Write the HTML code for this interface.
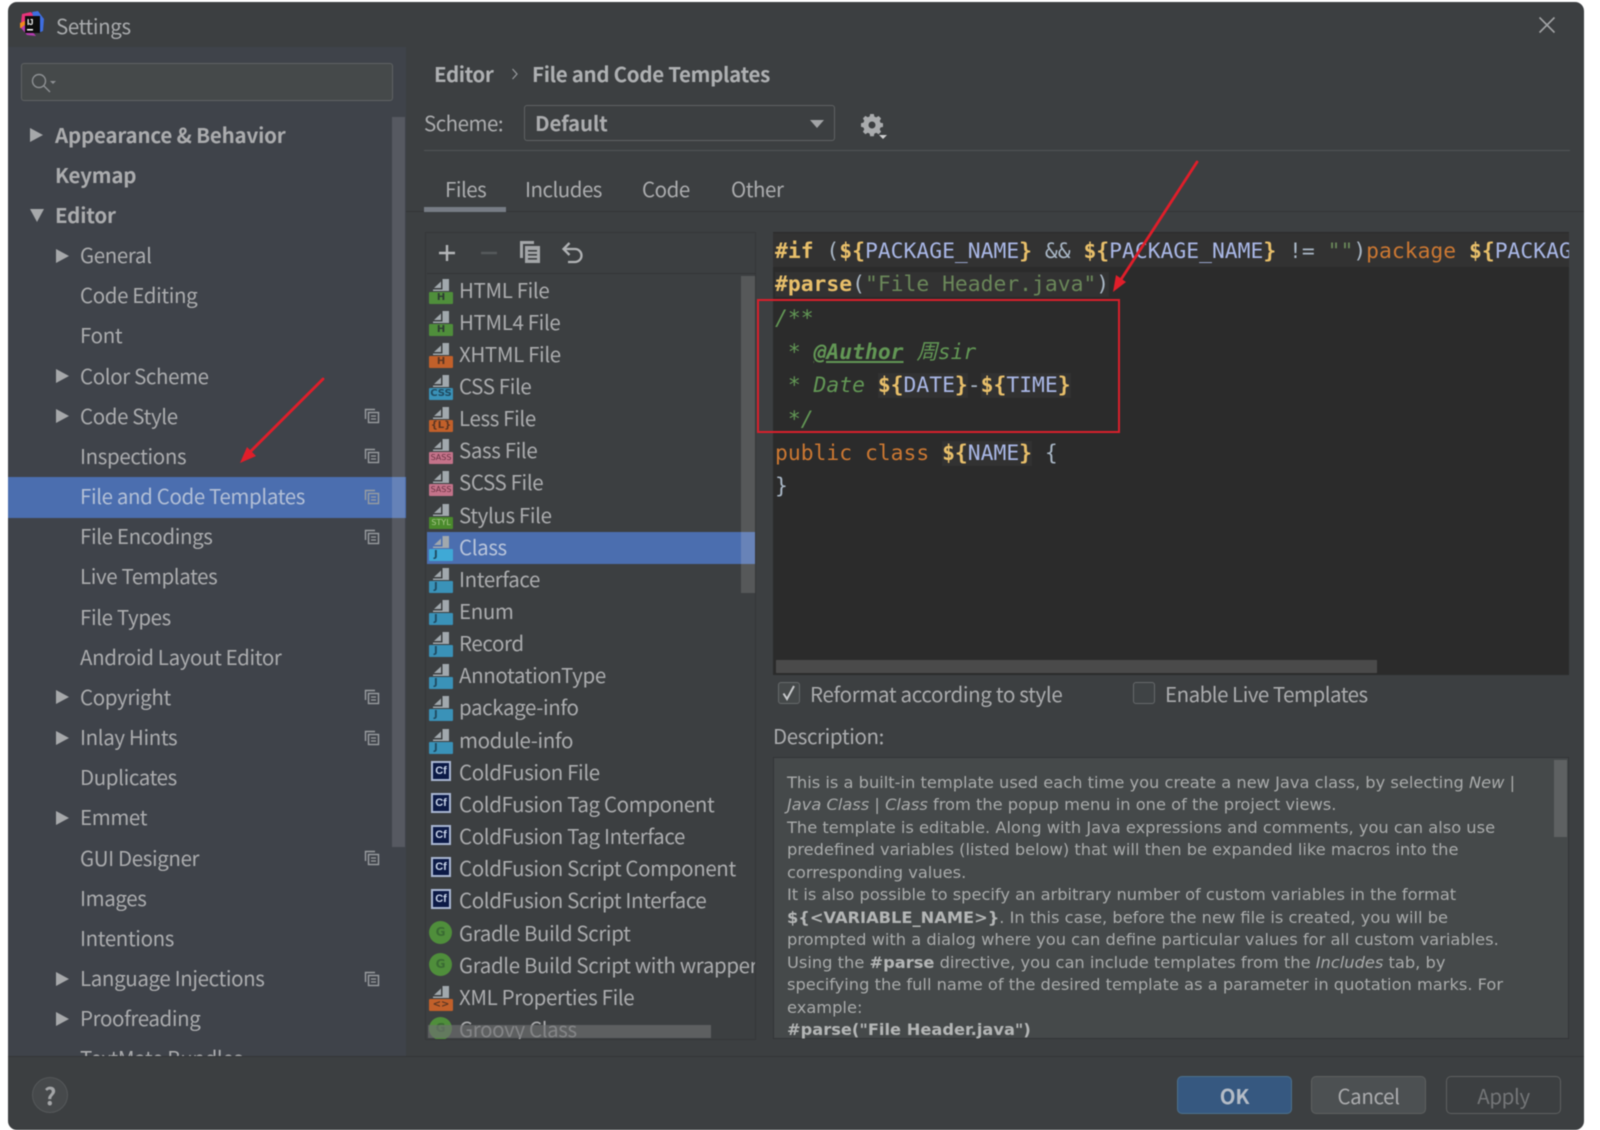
<!DOCTYPE html>
<html><head><meta charset="utf-8"><title>Settings</title>
<style>
html,body{margin:0;padding:0;background:#fff;width:1600px;height:1130px;overflow:hidden}
#root{position:absolute;left:0;top:0;width:1600px;height:1130px;overflow:hidden;filter:blur(.6px);font-family:"Noto Sans CJK SC","Liberation Sans",sans-serif;font-size:20.5px;letter-spacing:-.37px;color:#abacae}
#root div,#root svg{position:absolute}
#root span{position:static}
.t{white-space:pre}
.bd{font-weight:700;letter-spacing:-.18px}
#win{left:8px;top:2px;width:1576px;height:1128px;background:#3c3f41;border-radius:9px}
#side{left:8px;top:47px;width:398px;height:1009px;background:#3f434a;overflow:hidden}
#inner{left:-8px;top:-47px;width:420px;height:1130px}
.s{left:80px;height:40px;line-height:40px;white-space:pre;top:calc(113.5px + 40.17px*var(--i))}
.s.top{left:55px;font-weight:700;letter-spacing:-.18px}
.ar{width:0;height:0;border-top:7px solid transparent;border-bottom:7px solid transparent;border-left:13px solid #a6a8aa;left:-24px;top:14.5px}
.top .ar{left:-25px}
.dn{width:0;height:0;border-left:7px solid transparent;border-right:7px solid transparent;border-top:13px solid #a6a8aa;left:-25px;top:15px}
.cp{left:364px;width:16px;height:16px;top:calc(127px + 40.17px*var(--i))}
#l{left:425px;top:232px;width:331px;height:808px;background:#3c3f41;border:1px solid #353739;box-sizing:border-box;overflow:hidden}
#li{left:-425px;top:-232px;width:760px;height:1100px}
.f{left:428px;height:32px;line-height:32px;padding-left:30px;white-space:pre;top:calc(271.5px + 32.15px*var(--i))}
.d{left:4px;top:6px;width:20px;height:13px}
.b{left:0;top:19px;width:24px;height:12px;border-radius:1px;font:700 10px/12px "DejaVu Sans",sans-serif;letter-spacing:0;text-align:center;color:#2e3b33;overflow:hidden}
.cf{left:2px;top:6px;width:16px;height:16px;border:2px solid #a9b6d2;background:#0c1a46;color:#c8d4ea;font:700 11px/16px "Liberation Sans",sans-serif;letter-spacing:0;text-align:center}
.g{left:0;top:5px;width:23px;height:23px;border-radius:50%;background:#4f8e3b;color:#3a6b33;font:700 12px/23px "DejaVu Sans",sans-serif;letter-spacing:0;text-align:center}
#ed{left:773px;top:232px;width:796px;height:443px;background:#2b2b2b;overflow:hidden}
.c{left:2px;height:34px;white-space:pre;font:21.35px/34px "DejaVu Sans Mono","Liberation Mono",monospace;letter-spacing:0;color:#a9b7c6;top:calc(2.5px + 33.7px*var(--i))}
.y{color:#e8bf6a;font-weight:700}.v{color:#a9b7e6;font-weight:400}.bg{background:#323232}
.o{color:#cc7832}.gs{color:#6a8759}.cm{color:#629755;font-style:italic}
.ds{left:787px;height:22px;white-space:pre;font:16.25px/22px "DejaVu Sans",sans-serif;letter-spacing:0;color:#a9abab;top:calc(772px + 22.45px*var(--i))}
.ds b{color:#b4b6b6}
.btn{top:1076px;height:38px;width:115px;box-sizing:border-box;border-radius:5px;text-align:center;line-height:36px}
</style></head><body>
<div id="root">
<div id="win"></div>

<svg style="left:18px;top:10px" width="28" height="28" viewBox="0 0 28 28"><path d="M4 4l9-2 3 4-8 6-5 1z" fill="#e8337a"/><path d="M14 2l6-1 6 8-1 12-5 2z" fill="#3f6ee0"/><path d="M2 13l5-2 1 7-6 0z" fill="#f08a1d"/><path d="M3 18l6 7 9 1-10-12z" fill="#b53bb0"/><rect x="7" y="6" width="15" height="17" fill="#0d0d0d"/><text x="9" y="15" font-family="Liberation Sans" font-size="8" font-weight="700" fill="#fff">IJ</text><rect x="9" y="19" width="6" height="1.5" fill="#fff"/></svg>
<div class="t" style="left:56px;top:10px;line-height:30px;font-size:20.5px;color:#a9abad">Settings</div>
<svg style="left:1538px;top:16px" width="18" height="18" viewBox="0 0 18 18"><path d="M1.5 1.5L16.5 16.5M16.5 1.5L1.5 16.5" stroke="#a0a2a4" stroke-width="1.6"/></svg>

<div id="side"><div id="inner">
<div style="left:21px;top:63px;width:372px;height:38px;box-sizing:border-box;background:#45494a;border:1px solid #5f6263;border-radius:3px"></div>
<svg style="left:30px;top:72px" width="32" height="22" viewBox="0 0 32 22"><circle cx="9" cy="9" r="6.5" fill="none" stroke="#8d9093" stroke-width="1.4"/><path d="M13.5 13.5L20 20" stroke="#8d9093" stroke-width="1.4"/><path d="M20 9h6l-3 3z" fill="#8d9093"/></svg>
<div style="left:392px;top:117px;width:13px;height:730px;background:#565961"></div>
<div style="left:8px;top:477px;width:398px;height:41px;background:#4b6eaf"></div>
<div style="left:392px;top:477px;width:13px;height:41px;background:#6582b8"></div>

<div class="s top" style="--i:0"><div class="ar"></div>Appearance &amp; Behavior</div>
<div class="s top" style="--i:1">Keymap</div>
<div class="s top" style="--i:2"><div class="dn"></div>Editor</div>
<div class="s" style="--i:3"><div class="ar"></div>General</div>
<div class="s" style="--i:4">Code Editing</div>
<div class="s" style="--i:5">Font</div>
<div class="s" style="--i:6"><div class="ar"></div>Color Scheme</div>
<div class="s" style="--i:7"><div class="ar"></div>Code Style</div>
<div class="s" style="--i:8">Inspections</div>
<div class="s" style="--i:9;color:#b2bfd6">File and Code Templates</div>
<div class="s" style="--i:10">File Encodings</div>
<div class="s" style="--i:11">Live Templates</div>
<div class="s" style="--i:12">File Types</div>
<div class="s" style="--i:13">Android Layout Editor</div>
<div class="s" style="--i:14"><div class="ar"></div>Copyright</div>
<div class="s" style="--i:15"><div class="ar"></div>Inlay Hints</div>
<div class="s" style="--i:16">Duplicates</div>
<div class="s" style="--i:17"><div class="ar"></div>Emmet</div>
<div class="s" style="--i:18">GUI Designer</div>
<div class="s" style="--i:19">Images</div>
<div class="s" style="--i:20">Intentions</div>
<div class="s" style="--i:21"><div class="ar"></div>Language Injections</div>
<div class="s" style="--i:22"><div class="ar"></div>Proofreading</div>
<div class="s" style="--i:23">TextMate Bundles</div>

<svg width="0" height="0" style="position:absolute"><defs><symbol id="cpi" viewBox="0 0 16 16"><path d="M11 1.5H1.5V11" fill="none" stroke="#9a9da0" stroke-width="1.4"/><rect x="4.5" y="4.5" width="10" height="10" fill="none" stroke="#9a9da0" stroke-width="1.4"/><path d="M7 8h5M7 11h5" stroke="#9a9da0" stroke-width="1.3"/></symbol></defs></svg>
<svg class="cp" style="--i:7"><use href="#cpi"/></svg>
<svg class="cp" style="--i:8"><use href="#cpi"/></svg>
<svg class="cp" style="--i:9"><use href="#cpi"/></svg>
<svg class="cp" style="--i:10"><use href="#cpi"/></svg>
<svg class="cp" style="--i:14"><use href="#cpi"/></svg>
<svg class="cp" style="--i:15"><use href="#cpi"/></svg>
<svg class="cp" style="--i:18"><use href="#cpi"/></svg>
<svg class="cp" style="--i:21"><use href="#cpi"/></svg>
</div></div>

<!-- header -->
<div class="t bd" style="left:434px;top:56.500px;line-height:32px;color:#aeb0b2;letter-spacing:-.4px">Editor</div>
<svg style="left:510px;top:67px" width="10" height="14" viewBox="0 0 10 14"><path d="M2.5 2l4.5 5-4.5 5" fill="none" stroke="#94979a" stroke-width="1.3"/></svg>
<div class="t bd" style="left:532px;top:56.500px;line-height:32px;color:#aeb0b2;letter-spacing:-.3px">File and Code Templates</div>
<div class="t" style="left:424px;top:106px;line-height:32px;letter-spacing:-.5px">Scheme:</div>
<div style="left:524px;top:105px;width:311px;height:36px;box-sizing:border-box;border:1px solid #5f6263;border-radius:3px;background:#3c3f41"></div>
<div class="t bd" style="left:535px;top:106px;line-height:32px">Default</div>
<svg style="left:810px;top:120px" width="14" height="9" viewBox="0 0 14 9"><path d="M0 0h14L7 8z" fill="#a2a4a6"/></svg>
<svg style="left:860px;top:112.500px" width="28" height="28" viewBox="0 0 28 28"><path fill="#a9abad" fill-rule="evenodd" d="M10.2 1h3.6l.6 2.6 1.9.8 2.3-1.4 2.5 2.5-1.4 2.3.8 1.9 2.5.6v3.6l-2.5.6-.8 1.9 1.4 2.3-2.5 2.5-2.3-1.4-1.9.8-.6 2.6h-3.6l-.6-2.6-1.9-.8-2.3 1.4-2.5-2.5 1.4-2.3-.8-1.9L1 13.8v-3.6l2.5-.6.8-1.9L2.9 5.4l2.5-2.5 2.3 1.4 1.9-.8zM12 8.5a3.5 3.5 0 1 0 0 7 3.5 3.5 0 0 0 0-7z"/><path d="M19 22h8l-4 4z" fill="#cfd0d1"/></svg>
<div style="left:424px;top:150px;width:1146px;height:1px;background:#505355"></div>
<div class="t" style="left:445px;top:171.500px;line-height:32px;letter-spacing:-.5px">Files</div>
<div class="t" style="left:525px;top:171.500px;line-height:32px;letter-spacing:-.5px">Includes</div>
<div class="t" style="left:642px;top:171.500px;line-height:32px;letter-spacing:-.45px">Code</div>
<div class="t" style="left:731px;top:171.500px;line-height:32px;letter-spacing:-.45px">Other</div>
<div style="left:406px;top:211px;width:1178px;height:1px;background:#333537"></div>
<div style="left:424px;top:207px;width:82px;height:5px;background:#777c85"></div>

<!-- list -->
<div id="l"><div id="li">
<div style="left:426px;top:272px;width:330px;height:1px;background:#333537"></div>
<svg style="left:436px;top:242px" width="20" height="20" viewBox="0 0 20 20"><path d="M10 2v16M2 10h16" stroke="#b4b6b8" stroke-width="2.4"/></svg>
<svg style="left:478px;top:242px" width="20" height="20" viewBox="0 0 20 20"><path d="M2 10h16" stroke="#56595b" stroke-width="2.4"/></svg>
<svg style="left:518px;top:239px" width="22" height="24" viewBox="0 0 22 24"><path d="M1 1h14v3H4v14H1z" fill="#a4a7a9"/><path fill="#a4a7a9" fill-rule="evenodd" d="M6 6h15v17H6zM9 10v1.600h9V10zM9 14v1.600h9V14zM9 18v1.600h9V18z"/></svg>
<svg style="left:560px;top:240px" width="24" height="24" viewBox="0 0 24 24"><path d="M3 8h11a6.500 6.500 0 0 1 0 13H7" fill="none" stroke="#b0b2b4" stroke-width="2.300"/><path d="M8.500 2L2.500 8l6 6" fill="none" stroke="#b0b2b4" stroke-width="2.300"/></svg>

<div style="left:426px;top:530.500px;width:330px;height:32px;background:#4b6eaf"></div>
<div style="left:740px;top:275px;width:15px;height:317px;background:#565859"></div>
<div style="left:740px;top:530.500px;width:15px;height:32px;background:#6883b8"></div>

<svg width="0" height="0" style="position:absolute"><defs><symbol id="dc" viewBox="0 0 20 13"><path d="M1 9L8 2.500V9zM9.500 0H16V12H0V10.500H9.500z" fill="#a1a8ad"/></symbol></defs></svg>

<div class="f" style="--i:0"><svg class="d"><use href="#dc"/></svg><div class="b" style="background:#4f8e3b">H</div>HTML File</div>
<div class="f" style="--i:1"><svg class="d"><use href="#dc"/></svg><div class="b" style="background:#4f8e3b">H</div>HTML4 File</div>
<div class="f" style="--i:2"><svg class="d"><use href="#dc"/></svg><div class="b" style="background:#c2602a;color:#5a3522">H</div>XHTML File</div>
<div class="f" style="--i:3"><svg class="d"><use href="#dc"/></svg><div class="b" style="background:#3a92b8;color:#1f4a60">CSS</div>CSS File</div>
<div class="f" style="--i:4"><svg class="d"><use href="#dc"/></svg><div class="b" style="background:#c2602a;color:#5a3522">{L}</div>Less File</div>
<div class="f" style="--i:5"><svg class="d"><use href="#dc"/></svg><div class="b" style="background:#c4738a;color:#6a3344;font-size:8px;font-weight:400">SASS</div>Sass File</div>
<div class="f" style="--i:6"><svg class="d"><use href="#dc"/></svg><div class="b" style="background:#c4738a;color:#6a3344;font-size:8px;font-weight:400">SASS</div>SCSS File</div>
<div class="f" style="--i:7"><svg class="d"><use href="#dc"/></svg><div class="b" style="background:#4a8a2c;color:#a9c88a;font-size:8px;font-weight:400">STYL</div>Stylus File</div>
<div class="f" style="--i:8;color:#b8c4da"><svg class="d"><use href="#dc"/></svg><div class="b" style="background:#3fa9d6;color:#1f4a60;text-align:left;padding-left:5px;width:19px">J</div>Class</div>
<div class="f" style="--i:9"><svg class="d"><use href="#dc"/></svg><div class="b" style="background:#3a92b8;color:#1f4a60;text-align:left;padding-left:5px;width:19px">J</div>Interface</div>
<div class="f" style="--i:10"><svg class="d"><use href="#dc"/></svg><div class="b" style="background:#3a92b8;color:#1f4a60;text-align:left;padding-left:5px;width:19px">J</div>Enum</div>
<div class="f" style="--i:11"><svg class="d"><use href="#dc"/></svg><div class="b" style="background:#3a92b8;color:#1f4a60;text-align:left;padding-left:5px;width:19px">J</div>Record</div>
<div class="f" style="--i:12"><svg class="d"><use href="#dc"/></svg><div class="b" style="background:#3a92b8;color:#1f4a60;text-align:left;padding-left:5px;width:19px">J</div>AnnotationType</div>
<div class="f" style="--i:13"><svg class="d"><use href="#dc"/></svg><div class="b" style="background:#3a92b8;color:#1f4a60;text-align:left;padding-left:5px;width:19px">J</div>package-info</div>
<div class="f" style="--i:14"><svg class="d"><use href="#dc"/></svg><div class="b" style="background:#3a92b8;color:#1f4a60;text-align:left;padding-left:5px;width:19px">J</div>module-info</div>
<div class="f" style="--i:15"><div class="cf">Cf</div>ColdFusion File</div>
<div class="f" style="--i:16"><div class="cf">Cf</div>ColdFusion Tag Component</div>
<div class="f" style="--i:17"><div class="cf">Cf</div>ColdFusion Tag Interface</div>
<div class="f" style="--i:18"><div class="cf">Cf</div>ColdFusion Script Component</div>
<div class="f" style="--i:19"><div class="cf">Cf</div>ColdFusion Script Interface</div>
<div class="f" style="--i:20"><div class="g">G</div>Gradle Build Script</div>
<div class="f" style="--i:21"><div class="g">G</div>Gradle Build Script with wrapper</div>
<div class="f" style="--i:22"><svg class="d"><use href="#dc"/></svg><div class="b" style="background:#c2602a;color:#5a3522">&lt;&gt;</div>XML Properties File</div>
<div class="f" style="--i:23"><div class="g">G</div>Groovy Class</div>
<div style="left:427px;top:1024px;width:283px;height:13px;background:rgba(110,112,114,.65)"></div>
</div></div>

<!-- editor -->
<div id="ed">
<div style="left:0;top:1px;width:796px;height:34px;background:#323232"></div>
<div class="c" style="--i:0"><span class="y">#if</span> (<span class="y">${</span><span class="v">PACKAGE_NAME</span><span class="y">}</span> &amp;&amp; <span class="y">${</span><span class="v">PACKAGE_NAME</span><span class="y">}</span> != <span class="gs">""</span>)<span class="o">package</span> <span class="y">${</span><span class="v">PACKAGE_NAME</span><span class="y">}</span>;#end</div>
<div class="c" style="--i:1"><span class="bg"><span class="y">#parse</span>(<span class="gs">"File Header.java"</span>)</span></div>
<div class="c" style="--i:2"><span class="cm">/**</span></div>
<div class="c" style="--i:3"><span class="cm"> * <b style="text-decoration:underline">@Author</b> <span style="font-family:'DejaVu Sans Mono','Noto Sans CJK SC',monospace">周</span>sir</span></div>
<div class="c" style="--i:4"><span class="cm"> * Date </span><span class="bg"><span class="y">${</span><span class="v">DATE</span><span class="y">}</span></span>-<span class="bg"><span class="y">${</span><span class="v">TIME</span><span class="y">}</span></span></div>
<div class="c" style="--i:5"><span class="cm"> */</span></div>
<div class="c" style="--i:6"><span class="o">public class</span> <span class="bg"><span class="y">${</span><span class="v">NAME</span><span class="y">}</span></span> {</div>
<div class="c" style="--i:7">}</div>
<div style="left:3px;top:428px;width:601px;height:13px;background:#4a4a4a"></div>
</div>

<!-- checks -->
<div style="left:778px;top:682px;width:22px;height:22px;box-sizing:border-box;border:1px solid #66696b;border-radius:3px;background:#45494a"></div>
<svg style="left:781px;top:684px" width="16" height="18" viewBox="0 0 16 18"><path d="M2.500 9.500L6 15 13 2" fill="none" stroke="#c6c8ca" stroke-width="2"/></svg>
<div class="t" style="left:810px;top:677px;line-height:32px;letter-spacing:-.33px">Reformat according to style</div>
<div style="left:1133px;top:682px;width:22px;height:22px;box-sizing:border-box;border:1px solid #66696b;border-radius:3px;background:#3f4345"></div>
<div class="t" style="left:1165px;top:677px;line-height:32px;letter-spacing:-.5px">Enable Live Templates</div>
<div class="t" style="left:773px;top:719px;line-height:32px">Description:</div>

<!-- description -->
<div style="left:773px;top:757px;width:796px;height:282px;box-sizing:border-box;background:#45494a;border:1px solid #333537"></div>
<div style="left:1554px;top:760px;width:13px;height:77px;background:#5e6162"></div>
<div class="ds" style="--i:0">This is a built-in template used each time you create a new Java class, by selecting <i>New</i> |</div>
<div class="ds" style="--i:1"><i>Java Class</i> | <i>Class</i> from the popup menu in one of the project views.</div>
<div class="ds" style="--i:2">The template is editable. Along with Java expressions and comments, you can also use</div>
<div class="ds" style="--i:3">predefined variables (listed below) that will then be expanded like macros into the</div>
<div class="ds" style="--i:4">corresponding values.</div>
<div class="ds" style="--i:5">It is also possible to specify an arbitrary number of custom variables in the format</div>
<div class="ds" style="--i:6"><b>${&lt;VARIABLE_NAME&gt;}</b>. In this case, before the new file is created, you will be</div>
<div class="ds" style="--i:7">prompted with a dialog where you can define particular values for all custom variables.</div>
<div class="ds" style="--i:8">Using the <b>#parse</b> directive, you can include templates from the <i>Includes</i> tab, by</div>
<div class="ds" style="--i:9">specifying the full name of the desired template as a parameter in quotation marks. For</div>
<div class="ds" style="--i:10">example:</div>
<div class="ds" style="--i:11"><b>#parse("File Header.java")</b></div>

<!-- arrows / annotation -->
<div style="left:757px;top:299px;width:363px;height:134px;box-sizing:border-box;border:2.500px solid #d91f2b"></div>
<svg style="left:0;top:0" width="1600" height="1130" viewBox="0 0 1600 1130"><path d="M1197 162L1120 281" stroke="#e01e2a" stroke-width="2.800" fill="none" stroke-linecap="round"/><path d="M1113 292L1116 275 1126 282z" fill="#e01e2a"/><path d="M323 379L250 452" stroke="#e01e2a" stroke-width="2.800" fill="none" stroke-linecap="round"/><path d="M240 463L247 447 256 456z" fill="#e01e2a"/></svg>

<!-- footer -->
<div style="left:8px;top:1056px;width:1576px;height:1px;background:#333537"></div>
<div style="left:32px;top:1077px;width:36px;height:36px;box-sizing:border-box;border-radius:50%;background:#46494b;border:1px solid #55585a;text-align:center;font-weight:700;line-height:34px;font-size:24px;color:#a3a5a7">?</div>
<div class="btn bd" style="left:1177px;background:#365880;border:1px solid #4c708c;color:#b4bcc6">OK</div>
<div class="btn" style="left:1311px;background:#4c5052;border:1px solid #5e6060">Cancel</div>
<div class="btn" style="left:1446px;background:#3c3f41;border:1px solid #5e6060;color:#747678">Apply</div>
</div>
</body></html>
